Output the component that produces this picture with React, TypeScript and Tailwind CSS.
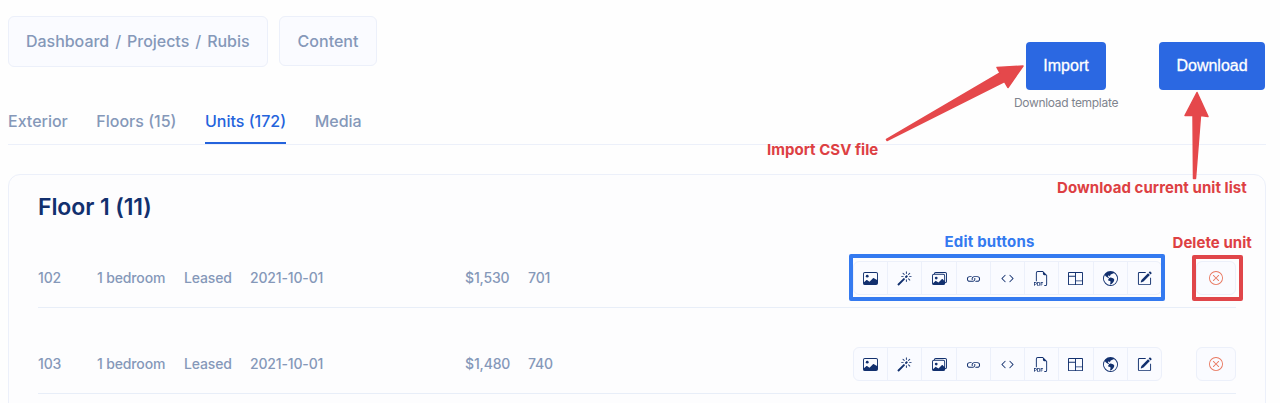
import type { IconType } from "react-icons";
import {
  BsCode,
  BsColumns,
  BsFiletypePdf,
  BsGlobeAmericas,
  BsImage,
  BsImages,
  BsLink,
  BsMagic,
  BsPencilSquare,
  BsXCircle,
} from "react-icons/bs";

interface Unit {
  number: string;
  type: string;
  status: string;
  date: string;
  price: string;
  area: string;
}

const units: Unit[] = [
  {
    number: "102",
    type: "1 bedroom",
    status: "Leased",
    date: "2021-10-01",
    price: "$1,530",
    area: "701",
  },
  {
    number: "103",
    type: "1 bedroom",
    status: "Leased",
    date: "2021-10-01",
    price: "$1,480",
    area: "740",
  },
];

const actions: { label: string; Icon: IconType }[] = [
  { label: "Image", Icon: BsImage },
  { label: "Effects", Icon: BsMagic },
  { label: "Gallery", Icon: BsImages },
  { label: "Link", Icon: BsLink },
  { label: "Embed", Icon: BsCode },
  { label: "PDF", Icon: BsFiletypePdf },
  { label: "Layout", Icon: BsColumns },
  { label: "Tour", Icon: BsGlobeAmericas },
  { label: "Edit", Icon: BsPencilSquare },
];

function Breadcrumbs() {
  return (
    <div className="flex items-start gap-[11px] text-[16px] font-medium text-[#8598b9]">
      <nav className="flex h-[51px] w-[260px] items-center gap-[6px] rounded-md border border-[#ecf0fa] bg-[#fafbff] pb-[2px] pl-[17px] tracking-[-0.03px]">
        <span>Dashboard</span>
        <span>/</span>
        <span>Projects</span>
        <span>/</span>
        <span>Rubis</span>
      </nav>
      <button className="flex h-[50px] w-[98px] items-center justify-center rounded-md border border-[#ecf0fa] bg-[#fafbff]">
        Content
      </button>
    </div>
  );
}

function Tabs() {
  return (
    <div className="flex h-[47px] gap-[28.5px] text-[16px] leading-[48px] font-medium text-[#8598b9]">
      <span>Exterior</span>
      <span>Floors (15)</span>
      <span className="h-[47px] border-b-2 border-[#2463dc] text-[#2463dc]">
        Units (172)
      </span>
      <span>Media</span>
    </div>
  );
}

function UnitRow({ unit }: { unit: Unit }) {
  return (
    <div className="flex h-[86px] items-center border-b border-[#e8eef8] pt-[27px] text-[14px] font-medium tracking-[-0.15px] text-[#8598b9]">
      <div className="flex pb-[2px]">
        <span className="w-[59px]">{unit.number}</span>
        <span className="w-[87px]">{unit.type}</span>
        <span className="w-[66px]">{unit.status}</span>
        <span className="w-[215px]">{unit.date}</span>
        <span className="w-[63px]">{unit.price}</span>
        <span>{unit.area}</span>
      </div>

      <div className="ml-auto flex h-[34px] w-[309px] divide-x divide-[#ecf0fa] rounded-md border border-[#ecf0fa] bg-[#fafbff] text-[#12306e]">
        {actions.map(({ label, Icon }) => (
          <button
            key={label}
            aria-label={label}
            className="flex flex-1 items-center justify-center"
          >
            <Icon className="h-[15px] w-[15px]" />
          </button>
        ))}
      </div>
      <button
        aria-label="Delete"
        className="ml-[34px] flex h-[34px] w-[40px] items-center justify-center rounded-md border border-[#ecf0fa] bg-[#fafbff] text-[#e8775f]"
      >
        <BsXCircle className="h-[14px] w-[14px]" />
      </button>
    </div>
  );
}

function Annotations() {
  return (
    <div className="pointer-events-none absolute inset-0 text-[15px] leading-[20px] font-bold whitespace-nowrap text-[#dd4043]">
      <svg
        className="absolute inset-0"
        width="1280"
        height="403"
        viewBox="0 0 1280 403"
        fill="#e5484b"
        stroke="#e5484b"
        strokeWidth="1.5"
        strokeLinejoin="round"
      >
        <path d="M886.5 139.5L1000 73L997 67.5L1023 66L1008 87.5L1004.500 81.500L887 140.500Z" />
        <path d="M1197 92.500L1208 116.500L1200.500 115.500L1195.500 178.500H1193.500L1193 115.500L1185 115.500Z" />
      </svg>
      <span className="absolute top-[140px] left-[767px] tracking-[0.03px]">
        Import CSV file
      </span>
      <span className="absolute top-[178px] left-[1057px] tracking-[0.06px]">
        Download current unit list
      </span>
      <span className="absolute top-[233px] left-[1172.5px] tracking-[0.05px]">
        Delete unit
      </span>
      <span className="absolute top-[232px] left-[944.5px] tracking-[0.2px] text-[#347af0]">
        Edit buttons
      </span>
      <div className="absolute top-[254px] left-[849px] h-[47px] w-[316px] rounded-[2px] border-4 border-[#347af0]" />
      <div className="absolute top-[255px] left-[1192px] h-[46px] w-[51px] rounded-[2px] border-4 border-[#e0464a]" />
    </div>
  );
}

export default function App() {
  return (
    <main className="relative h-[403px] w-[1280px] overflow-hidden bg-[#fefefe] pr-[14px] pl-2 font-['Inter',sans-serif]">
      <header className="flex h-[145px] justify-between border-b border-[#ecf0fa]">
        <div className="flex flex-col justify-between pt-4">
          <Breadcrumbs />
          <Tabs />
        </div>
        <div className="flex gap-[41px] pt-[42px] pr-px">
          <div className="flex w-[104px] flex-col items-center">
            <button className="h-[48px] w-[80px] rounded-[4px] bg-[#2b68e2] font-['Liberation_Sans',sans-serif] text-[16px] text-white [-webkit-text-stroke:0.3px_white]">
              Import
            </button>
            <a className="mt-[5px] text-[12px] leading-[16px] tracking-[-0.3px] whitespace-nowrap text-[#7f848e]">
              Download template
            </a>
          </div>
          <button className="h-[48px] w-[106px] rounded-[4px] bg-[#2b68e2] font-['Liberation_Sans',sans-serif] text-[16px] text-white [-webkit-text-stroke:0.3px_white]">
            Download
          </button>
        </div>
      </header>

      <section className="mt-[29px] h-[260px] rounded-xl border border-[#ecf0fa] bg-[#fdfdfe] px-[29px] pt-[16px]">
        <h2 className="h-[31px] text-[23px] leading-[33px] font-semibold tracking-[-0.1px] text-[#12306e]">
          Floor 1 (11)
        </h2>
        {units.map((unit) => (
          <UnitRow key={unit.number} unit={unit} />
        ))}
      </section>

      <Annotations />
    </main>
  );
}
